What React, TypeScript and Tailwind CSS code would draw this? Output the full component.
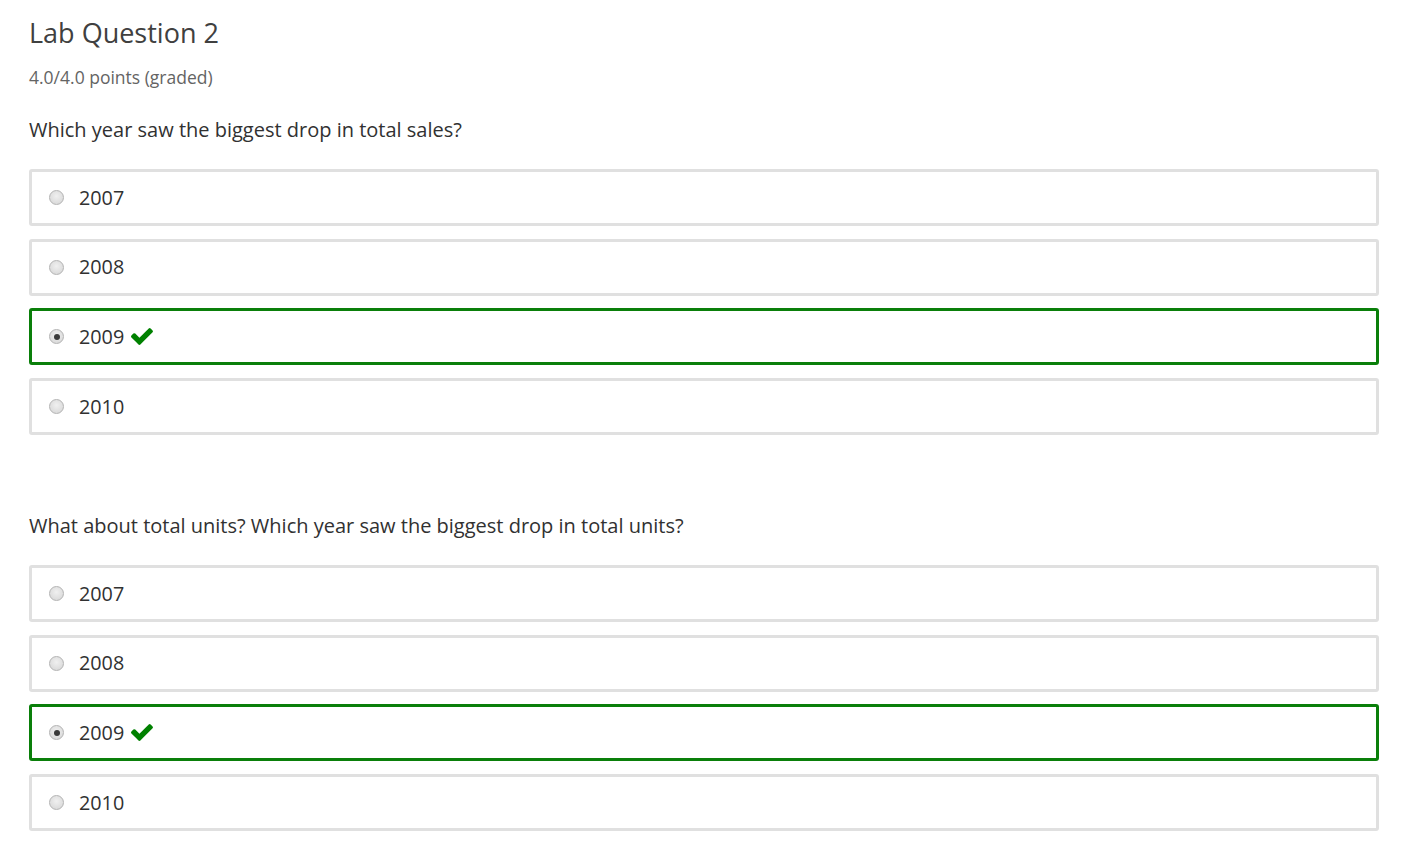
import React from "react";

type Choice = { label: string; correct?: boolean };

const years: Choice[] = [
    { label: "2007" },
    { label: "2008" },
    { label: "2009", correct: true },
    { label: "2010" },
];

function Radio({ checked }: { checked?: boolean }) {
    return (
        <span className="flex h-[15px] w-[15px] shrink-0 items-center justify-center rounded-full border border-[#b3b3b3] bg-[radial-gradient(circle_at_50%_40%,#f0f0f0,#d4d4d4)]">
            {checked && <span className="h-[6px] w-[6px] rounded-full bg-[#3a3a3a]" />}
        </span>
    );
}

function Check() {
    return (
        <svg viewBox="121 330 1550 1200" className="ml-[7px] h-[17px] w-[22px]" fill="#008100">
            <path d="M1671 566q0 40-28 68l-724 724-136 136q-28 28-68 28t-68-28l-136-136-362-362q-28-28-28-68t28-68l136-136q28-28 68-28t68 28l294 295 656-657q28-28 68-28t68 28l136 136q28 28 28 68z" />
        </svg>
    );
}

function Question({ text, name }: { text: string; name: string }) {
    return (
        <div>
            <p className="text-[20px] leading-[28px] text-[#313131]">{text}</p>
            <div className="mt-[25px] flex flex-col gap-[12.7px]">
                {years.map((c) => (
                    <label
                        key={name + c.label}
                        className={`flex h-[57px] items-center rounded-[3px] border-[3px] pl-[17px] ${
                            c.correct ? "border-[#0a7f0a]" : "border-[#e0e0e0]"
                        }`}
                    >
                        <Radio checked={c.correct} />
                        <span className="ml-[15px] text-[19.8px] text-[#313131]">{c.label}</span>
                        {c.correct && <Check />}
                    </label>
                ))}
            </div>
        </div>
    );
}

export default function App() {
    return (
        <div className="min-h-screen bg-white pl-[29px] pr-[42px] pt-[16px] font-['Open_Sans',sans-serif]">
            <h2 className="text-[27px] leading-[34px] text-[#404040]">Lab Question 2</h2>
            <div className="mt-[15px] text-[17.5px] leading-[24px] text-[#646464]">4.0/4.0 points (graded)</div>

            <div className="mt-[27px]">
                <Question name="q1" text="Which year saw the biggest drop in total sales?" />
            </div>
            <div className="mt-[77px]">
                <Question name="q2" text="What about total units? Which year saw the biggest drop in total units?" />
            </div>
        </div>
    );
}
